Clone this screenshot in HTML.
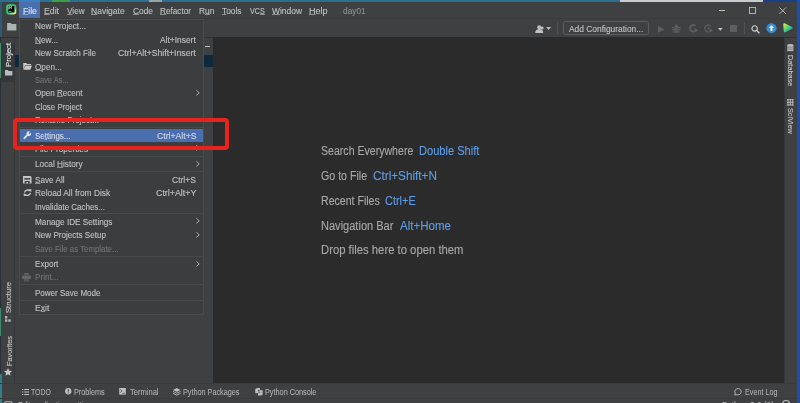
<!DOCTYPE html>
<html><head><meta charset="utf-8"><style>
html,body{margin:0;padding:0;width:800px;height:403px;overflow:hidden;background:#3c3f41}
body{position:relative;font-family:"Liberation Sans",sans-serif}
#w{position:absolute;left:0;top:0;width:800px;height:403px;will-change:transform}
.r{position:absolute}
.s{position:absolute;overflow:visible}
.t{position:absolute;white-space:nowrap;line-height:1.117;transform-origin:0 0;-webkit-text-stroke:0.12px currentColor}
.t u{text-decoration:underline;text-decoration-thickness:0.6px;text-underline-offset:0.3px;text-decoration-color:rgba(200,200,200,.6)}
.vl{transform:rotate(-90deg) translate(-100%,0);transform-origin:0 0;line-height:12px;text-align:right}
.vr{transform:rotate(90deg) translate(0,-100%);transform-origin:0 0;line-height:10px}
</style></head><body><div id="w">
<div class="r" style="left:0px;top:0px;width:800.00px;height:403.00px;background:#3e4042;"></div>
<div class="r" style="left:0px;top:0px;width:800.00px;height:1.60px;background:#2a6f8f;"></div>
<div class="r" style="left:19px;top:0px;width:21.00px;height:1.60px;background:#3a7fc0;"></div>
<div class="r" style="left:52px;top:0px;width:18.00px;height:1.60px;background:#3aa04a;"></div>
<div class="r" style="left:149px;top:0px;width:13.00px;height:1.60px;background:#9aa4a8;"></div>
<div class="r" style="left:620px;top:0px;width:143.00px;height:1.60px;background:#c8ccd0;"></div>
<div class="r" style="left:763px;top:0px;width:37.00px;height:1.60px;background:#1c3f8c;"></div>
<div class="r" style="left:796.8px;top:0px;width:3.20px;height:403.00px;background:#1e4fa8;"></div>
<div class="r" style="left:0px;top:18.4px;width:796.80px;height:0.60px;background:#3a3c3e;"></div>
<div class="r" style="left:0px;top:36.6px;width:796.80px;height:0.80px;background:#2f3133;"></div>
<div class="r" style="left:213.4px;top:37.4px;width:570.20px;height:345.80px;background:#2b2b2b;"></div>
<div class="r" style="left:14px;top:37.4px;width:0.60px;height:345.80px;background:#343638;"></div>
<div class="r" style="left:783.6px;top:37.4px;width:0.60px;height:345.80px;background:#343638;"></div>
<div class="r" style="left:0px;top:37px;width:1.40px;height:366.00px;background:#2a3238;"></div>
<div class="r" style="left:0px;top:43px;width:1.40px;height:35.00px;background:#3f8f6a;"></div>
<div class="r" style="left:1.4px;top:43px;width:12.60px;height:39.30px;background:#35383a;"></div>
<div class="r" style="left:0px;top:308px;width:1.40px;height:28.00px;background:#3a8a6c;"></div>
<div class="r" style="left:0px;top:374px;width:1.50px;height:29.00px;background:#2e7f8a;"></div>
<div class="r" style="left:14.6px;top:54.6px;width:198.80px;height:12.60px;background:#0d293e;"></div>
<div class="r" style="left:0px;top:383.2px;width:796.80px;height:0.60px;background:#383a3c;"></div>
<div class="r" style="left:0px;top:398.2px;width:796.80px;height:0.60px;background:#393b3d;"></div>
<div class="r" style="left:19.2px;top:1.6px;width:21.00px;height:16.80px;background:#4b6eaf;"></div>
<div class="t" style="left:22.51px;top:6.00px;font-size:9.30px;color:#dfe4ec;transform:scaleX(0.9237);"><u>F</u>ile</div>
<div class="t" style="left:43.50px;top:6.00px;font-size:9.30px;color:#c0c0c0;transform:scaleX(0.9376);"><u>E</u>dit</div>
<div class="t" style="left:66.70px;top:6.00px;font-size:9.30px;color:#c0c0c0;transform:scaleX(0.8802);"><u>V</u>iew</div>
<div class="t" style="left:91.12px;top:6.00px;font-size:9.30px;color:#c0c0c0;transform:scaleX(0.9164);"><u>N</u>avigate</div>
<div class="t" style="left:132.78px;top:6.00px;font-size:9.30px;color:#c0c0c0;transform:scaleX(0.8976);"><u>C</u>ode</div>
<div class="t" style="left:160.04px;top:6.00px;font-size:9.30px;color:#c0c0c0;transform:scaleX(0.8841);"><u>R</u>efactor</div>
<div class="t" style="left:199.33px;top:6.00px;font-size:9.30px;color:#c0c0c0;transform:scaleX(0.9008);">R<u>u</u>n</div>
<div class="t" style="left:221.93px;top:6.00px;font-size:9.30px;color:#c0c0c0;transform:scaleX(0.9008);"><u>T</u>ools</div>
<div class="t" style="left:250.00px;top:6.00px;font-size:9.30px;color:#c0c0c0;transform:scaleX(0.7738);">VC<u>S</u></div>
<div class="t" style="left:272.00px;top:6.00px;font-size:9.30px;color:#c0c0c0;transform:scaleX(0.9061);"><u>W</u>indow</div>
<div class="t" style="left:308.78px;top:6.00px;font-size:9.30px;color:#c0c0c0;transform:scaleX(0.9725);"><u>H</u>elp</div>
<div class="t" style="left:343.42px;top:6.00px;font-size:9.30px;color:#8a8d8f;transform:scaleX(0.8961);">day01</div>
<svg class="s" style="left:5.6px;top:4.4px;" width="10.5" height="10.7" viewBox="0 0 10 10"><defs><linearGradient id="pg" x1="0" y1="0" x2="1" y2="1"><stop offset="0" stop-color="#36d98c"/><stop offset=".45" stop-color="#22c76e"/><stop offset=".62" stop-color="#3cc8b0"/><stop offset=".8" stop-color="#c8f060"/><stop offset="1" stop-color="#f8f45a"/></linearGradient></defs><rect x="0.2" y="0.2" width="9.6" height="9.6" rx="2.6" fill="url(#pg)"/><rect x="2.2" y="1.8" width="5.8" height="6.2" fill="#040604"/><path d="M2.8 2.5h1.2v1.3H2.8M2.8 2.5v2.4M5.7 2.5h-.9v1.5h1" stroke="#e0ece0" stroke-width=".7" fill="none"/><rect x="2.8" y="6.8" width="2.2" height=".6" fill="#c8d4c8"/></svg>
<div class="r" style="left:0px;top:1.6px;width:1.50px;height:35.40px;background:#2c5a70;"></div>
<div class="r" style="left:719px;top:9.6px;width:6.40px;height:0.80px;background:#bbbbbb;"></div>
<svg class="s" style="left:749px;top:6.8px;" width="7" height="7" viewBox="0 0 7 7"><rect x=".5" y=".5" width="6" height="6" fill="none" stroke="#bbbbbb" stroke-width=".9"/></svg>
<svg class="s" style="left:778.8px;top:6.6px;" width="7.4" height="7.4" viewBox="0 0 7 7"><path d="M.5 .5L6.5 6.5M6.5 .5L.5 6.5" stroke="#bbbbbb" stroke-width=".9"/></svg>
<svg class="s" style="left:7.2px;top:23.4px;" width="9.5" height="7.4" viewBox="0 0 10 8"><path d="M0 0h4l1 1.2h5V8H0z" fill="#aab4b4"/></svg>
<svg class="s" style="left:535.4px;top:24.6px;" width="10.5" height="8" viewBox="0 0 10 8"><circle cx="4" cy="2.2" r="2" fill="#c0c0c0"/><path d="M0 8c0-3 1.8-4 4-4s4 1 4 4z" fill="#c0c0c0"/><circle cx="6.8" cy="3" r="1.6" fill="#c0c0c0"/></svg>
<svg class="s" style="left:546px;top:27.4px;" width="5.2" height="3" viewBox="0 0 5 3"><path d="M0 0h5L2.5 3z" fill="#bbbbbb"/></svg>
<div class="r" style="left:557px;top:22px;width:0.80px;height:12.40px;background:#505355;"></div>
<div class="r" style="left:562.7px;top:21.2px;width:86.00px;height:13.60px;background:transparent;border:1px solid #5b5e60;border-radius:2.5px;box-sizing:border-box"></div>
<div class="t" style="left:568.70px;top:24.00px;font-size:9.00px;color:#c0c0c0;transform:scaleX(0.9333);">Add Configuration...</div>
<svg class="s" style="left:657.6px;top:25.7px;" width="6.6" height="6.8" viewBox="0 0 7 7"><path d="M0 0L7 3.5L0 7z" fill="#5c5f61"/></svg>
<svg class="s" style="left:672.4px;top:24.2px;" width="8.8" height="8.8" viewBox="0 0 9 9"><ellipse cx="4.5" cy="5.4" rx="2.5" ry="3.3" fill="#5c5f61"/><circle cx="4.5" cy="1.8" r="1.4" fill="#5c5f61"/><path d="M0 3.6h9M0 5.8h9M.4 8.2h8.2" stroke="#5c5f61" stroke-width="1"/><path d="M2.4 4.7h4.2M2.4 6.9h4.2" stroke="#45484a" stroke-width=".6"/></svg>
<svg class="s" style="left:688.6px;top:24.4px;" width="9.6" height="9" viewBox="0 0 10 9"><path d="M6.4 1.6A3.4 3.4 0 1 0 5.4 7.6" stroke="#5c5f61" stroke-width="2" fill="none"/><path d="M5.6 3.8L9.6 6.3L5.6 8.8z" fill="#5c5f61"/></svg>
<svg class="s" style="left:704px;top:24.4px;" width="9.6" height="9" viewBox="0 0 10 9"><path d="M7.2 2.2A3.6 3.6 0 1 0 5 8" stroke="#5c5f61" stroke-width="1.2" fill="none"/><path d="M4.4 2.6v2.2h2" stroke="#5c5f61" stroke-width="1.1" fill="none"/><path d="M5.8 4.4L9.6 6.6L5.8 8.8z" fill="#5c5f61"/></svg>
<svg class="s" style="left:718.3px;top:27.6px;" width="4.6" height="2.8" viewBox="0 0 5 3"><path d="M0 0h5L2.5 3z" fill="#c8c8c8"/></svg>
<div class="r" style="left:729.8px;top:25.4px;width:7.40px;height:7.00px;background:#5c5f61;"></div>
<div class="r" style="left:744px;top:22px;width:0.80px;height:12.40px;background:#505355;"></div>
<svg class="s" style="left:750.6px;top:24.7px;" width="9" height="8.6" viewBox="0 0 9 9"><circle cx="3.6" cy="3.6" r="2.8" fill="none" stroke="#d0d0d0" stroke-width="1.2"/><path d="M5.6 5.6L8.6 8.6" stroke="#d0d0d0" stroke-width="1.4"/></svg>
<svg class="s" style="left:765.8px;top:23.3px;" width="11" height="10.5" viewBox="0 0 11 11"><circle cx="5.5" cy="5.5" r="5.3" fill="#3a8fd3"/><circle cx="5.5" cy="5.5" r="4.8" fill="none" stroke="#2f7ebf" stroke-width=".5"/><path d="M5.5 2.3L8.2 5.3H6.5V8.5H4.5V5.3H2.8z" fill="#f4f8fc"/></svg>
<svg class="s" style="left:782.8px;top:23.4px;" width="9.8" height="9.8" viewBox="0 0 10 10"><defs><linearGradient id="jg" x1="0" y1="0" x2="1" y2="1"><stop offset="0" stop-color="#f2f25a"/><stop offset=".35" stop-color="#7ada5a"/><stop offset=".6" stop-color="#2cc49a"/><stop offset="1" stop-color="#1a78c8"/></linearGradient></defs><path d="M1.4 .2C.7 .2 .2 .8 .3 1.6L.8 8.6C.9 9.5 1.6 9.9 2.4 9.5L9.3 5.8C10 5.4 10 4.6 9.3 4.2L2.2 .4z" fill="url(#jg)"/></svg>
<div class="t" style="left:4.85px;top:67.22px;font-size:6.30px;color:#e6e6e6;transform:rotate(-90deg) scaleX(1.2258);">Project</div>
<svg class="s" style="left:4.6px;top:69.9px;" width="7.4" height="5.6" viewBox="0 0 8 6"><path d="M0 0h3l1 1h4v5H0z" fill="#b8bcbe"/></svg>
<div class="t" style="left:5.09px;top:313.24px;font-size:7.00px;color:#c4c4c4;transform:rotate(-90deg) scaleX(1.0939);">Structure</div>
<svg class="s" style="left:5px;top:316.2px;" width="5.8" height="6" viewBox="0 0 6 6"><rect x="0" y="0" width="2.4" height="2.4" fill="#bbb"/><rect x="0" y="3.4" width="2.4" height="2.4" fill="#bbb"/><rect x="3.4" y="3.4" width="2.4" height="2.4" fill="#bbb"/></svg>
<div class="t" style="left:5.69px;top:366.38px;font-size:7.00px;color:#c4c4c4;transform:rotate(-90deg) scaleX(1.0406);">Favorites</div>
<svg class="s" style="left:3.8px;top:368px;" width="8" height="8" viewBox="0 0 10 10"><path d="M5 0l1.5 3.3 3.5.4-2.6 2.4.7 3.5L5 7.8 1.9 9.6l.7-3.5L0 3.7l3.5-.4z" fill="#c8c8c8"/></svg>
<div class="r" style="left:205px;top:45.8px;width:4.60px;height:1.00px;background:#c0c0c0;"></div>
<svg class="s" style="left:786.9px;top:44.4px;" width="6.7" height="7.5" viewBox="0 0 7 8"><ellipse cx="3.5" cy="1.2" rx="3.3" ry="1.1" fill="#bbb"/><rect x=".2" y="1.2" width="6.6" height="6.4" fill="#bbb"/><path d="M.2 3.3h6.6M.2 5.4h6.6" stroke="#3c3f41" stroke-width=".5"/></svg>
<div class="t" style="left:793.90px;top:54.91px;font-size:7.00px;color:#c4c4c4;transform:rotate(90deg) scaleX(1.0474);">Database</div>
<svg class="s" style="left:786.9px;top:99px;" width="6.7" height="6.7" viewBox="0 0 7 7"><path d="M0 .8h7M0 3.5h7M0 6.2h7M1 0v7M3.5 0v7M6 0v7" stroke="#bbb" stroke-width="1"/></svg>
<div class="t" style="left:794.11px;top:108.27px;font-size:7.00px;color:#c4c4c4;transform:rotate(90deg) scaleX(1.0423);">SciView</div>
<div class="t" style="left:321.32px;top:145.00px;font-size:12.30px;color:#a8a8a8;transform:scaleX(0.8601);-webkit-text-stroke:0.12px currentColor">Search Everywhere</div>
<div class="t" style="left:419.31px;top:145.00px;font-size:12.30px;color:#5d9de8;transform:scaleX(0.9017);-webkit-text-stroke:0.12px currentColor">Double Shift</div>
<div class="t" style="left:321.27px;top:170.00px;font-size:12.30px;color:#a8a8a8;transform:scaleX(0.8657);-webkit-text-stroke:0.12px currentColor">Go to File</div>
<div class="t" style="left:373.41px;top:170.00px;font-size:12.30px;color:#5d9de8;transform:scaleX(0.9551);-webkit-text-stroke:0.12px currentColor">Ctrl+Shift+N</div>
<div class="t" style="left:320.95px;top:195.00px;font-size:12.30px;color:#a8a8a8;transform:scaleX(0.8600);-webkit-text-stroke:0.12px currentColor">Recent Files</div>
<div class="t" style="left:385.25px;top:195.00px;font-size:12.30px;color:#5d9de8;transform:scaleX(0.8894);-webkit-text-stroke:0.12px currentColor">Ctrl+E</div>
<div class="t" style="left:320.92px;top:220.00px;font-size:12.30px;color:#a8a8a8;transform:scaleX(0.8979);-webkit-text-stroke:0.12px currentColor">Navigation Bar</div>
<div class="t" style="left:399.60px;top:220.00px;font-size:12.30px;color:#5d9de8;transform:scaleX(0.9366);-webkit-text-stroke:0.12px currentColor">Alt+Home</div>
<div class="t" style="left:320.90px;top:244.00px;font-size:12.30px;color:#a8a8a8;transform:scaleX(0.9183);-webkit-text-stroke:0.12px currentColor">Drop files here to open them</div>
<svg class="s" style="left:21.6px;top:388.6px;" width="7" height="6" viewBox="0 0 7 6"><path d="M0 .5h1.2M0 3h1.2M0 5.5h1.2M2.2 .5H7M2.2 3H7M2.2 5.5H7" stroke="#c0c0c0" stroke-width="1"/></svg>
<div class="t" style="left:31.46px;top:388.00px;font-size:8.40px;color:#b4b4b4;transform:scaleX(0.8234);-webkit-text-stroke:0.05px currentColor">TODO</div>
<svg class="s" style="left:65px;top:388px;" width="6.5" height="6.5" viewBox="0 0 7 7"><circle cx="3.5" cy="3.5" r="3.4" fill="#c0c0c0"/><path d="M3.5 1.4v2.6M3.5 4.8v1" stroke="#3c3f41" stroke-width="1.1"/></svg>
<div class="t" style="left:74.42px;top:388.00px;font-size:8.40px;color:#b4b4b4;transform:scaleX(0.8690);-webkit-text-stroke:0.05px currentColor">Problems</div>
<svg class="s" style="left:119px;top:388px;" width="7" height="6.6" viewBox="0 0 7 7"><rect x="0" y="0" width="7" height="7" fill="#c0c0c0"/><path d="M1.2 1.6L3 3.2L1.2 4.8M3.4 5.6h2.4" stroke="#3c3f41" stroke-width=".8" fill="none"/></svg>
<div class="t" style="left:129.85px;top:388.00px;font-size:8.40px;color:#b4b4b4;transform:scaleX(0.9021);-webkit-text-stroke:0.05px currentColor">Terminal</div>
<svg class="s" style="left:172.5px;top:387.8px;" width="7.5" height="7.5" viewBox="0 0 8 8"><path d="M4 0L8 2L4 4L0 2z" fill="#c0c0c0"/><path d="M0 3.6L4 5.6L8 3.6M0 5.6L4 7.6L8 5.6" stroke="#c0c0c0" stroke-width=".9" fill="none"/></svg>
<div class="t" style="left:182.72px;top:388.00px;font-size:8.40px;color:#b4b4b4;transform:scaleX(0.8645);-webkit-text-stroke:0.05px currentColor">Python Packages</div>
<svg class="s" style="left:254.7px;top:387.8px;" width="7.9" height="7.4" viewBox="0 0 8 8"><path d="M2 0h3v2.2H3v1H0V1zM6 8H3V5.8h2v-1h3V7z" fill="#c0c0c0"/><rect x="0" y="3" width="3.6" height="2.6" fill="#c0c0c0"/><rect x="4.4" y="2.4" width="3.6" height="2.6" fill="#c0c0c0"/></svg>
<div class="t" style="left:265.42px;top:388.00px;font-size:8.40px;color:#b4b4b4;transform:scaleX(0.8697);-webkit-text-stroke:0.05px currentColor">Python Console</div>
<svg class="s" style="left:734px;top:387.7px;" width="8.2" height="7.2" viewBox="0 0 8 7"><path d="M4 .5a3.4 3.1 0 1 1-1.5 6L.6 6.8l.7-1.6A3.4 3.1 0 0 1 4 .5z" fill="none" stroke="#c0c0c0" stroke-width=".9"/></svg>
<div class="t" style="left:744.92px;top:388.00px;font-size:8.40px;color:#b4b4b4;transform:scaleX(0.8601);-webkit-text-stroke:0.05px currentColor">Event Log</div>
<svg class="s" style="left:4.4px;top:400.6px;" width="8.7" height="8" viewBox="0 0 9 8"><rect x=".6" y=".6" width="7.8" height="7" rx="1.4" fill="none" stroke="#bbb" stroke-width="1.1"/></svg>
<div class="t" style="left:17.81px;top:401.00px;font-size:8.60px;color:#b4b4b4;transform:scaleX(0.8528);-webkit-text-stroke:0.05px currentColor">Edit application settings</div>
<div class="t" style="left:722.34px;top:401.00px;font-size:8.60px;color:#b4b4b4;transform:scaleX(0.9613);-webkit-text-stroke:0.05px currentColor">Python 3.6 (2)</div>
<svg class="s" style="left:781.7px;top:400.4px;" width="8" height="8" viewBox="0 0 8 8"><circle cx="4" cy="4" r="3.5" fill="none" stroke="#bbb" stroke-width="1.2"/></svg>
<div class="r" style="left:19px;top:18.8px;width:185.20px;height:296.20px;background:#3c3d3f;border:1px solid #4a4b4d;box-sizing:border-box"></div>
<div class="t" style="left:35.14px;top:21.00px;font-size:9.15px;color:#c0c0c0;transform:scaleX(0.8971);">New Project...</div>
<div class="t" style="left:35.13px;top:35.00px;font-size:9.15px;color:#c0c0c0;transform:scaleX(0.9087);"><u>N</u>ew...</div>
<div class="t" style="left:160.00px;top:35.00px;font-size:9.15px;color:#c0c0c0;transform:scaleX(0.9206);">Alt+Insert</div>
<div class="t" style="left:35.15px;top:48.00px;font-size:9.15px;color:#c0c0c0;transform:scaleX(0.8849);">New Scratch File</div>
<div class="t" style="left:117.82px;top:48.00px;font-size:9.15px;color:#c0c0c0;transform:scaleX(0.9496);">Ctrl+Alt+Shift+Insert</div>
<div class="t" style="left:35.43px;top:62.00px;font-size:9.15px;color:#c0c0c0;transform:scaleX(0.8931);"><u>O</u>pen...</div>
<svg class="s" style="left:22.8px;top:62.99999999999999px;" width="9.2" height="6.8" viewBox="0 0 9 7"><path d="M0 0h3l1 1h4v1.4H2L0 6.6z" fill="#c8c8c8"/><path d="M2.3 2.8H9L7.2 7H0z" fill="#c8c8c8"/></svg>
<div class="t" style="left:35.46px;top:75.00px;font-size:9.15px;color:#727272;transform:scaleX(0.8178);">Save As...</div>
<div class="t" style="left:35.44px;top:88.00px;font-size:9.15px;color:#c0c0c0;transform:scaleX(0.8825);">Open <u>R</u>ecent</div>
<svg class="s" style="left:196px;top:89.70000000000002px;" width="3.8" height="5.8" viewBox="0 0 4 6"><path d="M.4 .3L3.4 3L.4 5.7" stroke="#c0c0c0" stroke-width=".9" fill="none"/></svg>
<div class="t" style="left:35.40px;top:102.00px;font-size:9.15px;color:#c0c0c0;transform:scaleX(0.8658);">Close Project</div>
<div class="t" style="left:35.16px;top:115.00px;font-size:9.15px;color:#c0c0c0;transform:scaleX(0.8746);">Rename Project...</div>
<div class="r" style="left:20px;top:127.00000000000003px;width:183.20px;height:0.80px;background:#48494b;"></div>
<div class="r" style="left:19.8px;top:128.8px;width:183.60px;height:13.30px;background:#4b6eaf;"></div>
<div class="t" style="left:35.44px;top:131.00px;font-size:9.15px;color:#d4dbe8;transform:scaleX(0.8738);">Se<u>t</u>tings...</div>
<div class="t" style="left:156.57px;top:131.00px;font-size:9.15px;color:#cdd5e3;transform:scaleX(0.9497);">Ctrl+Alt+S</div>
<svg class="s" style="left:22.5px;top:130.90000000000003px;" width="8.6" height="8.4" viewBox="0 0 9 9"><path d="M1.3 7.7L4.9 4.1" stroke="#dfe3ea" stroke-width="2" stroke-linecap="round"/><circle cx="6.1" cy="2.9" r="2.5" fill="#dfe3ea"/><path d="M6.3 2.7L8.9 0.1" stroke="#4b6eaf" stroke-width="1.4"/></svg>
<div class="t" style="left:35.14px;top:144.00px;font-size:9.15px;color:#c0c0c0;transform:scaleX(0.9013);">File Properties</div>
<svg class="s" style="left:196px;top:145.30000000000004px;" width="3.8" height="5.8" viewBox="0 0 4 6"><path d="M.4 .3L3.4 3L.4 5.7" stroke="#c0c0c0" stroke-width=".9" fill="none"/></svg>
<div class="r" style="left:20px;top:155.80000000000004px;width:183.20px;height:0.80px;background:#48494b;"></div>
<div class="t" style="left:35.14px;top:159.00px;font-size:9.15px;color:#c0c0c0;transform:scaleX(0.9050);">Local <u>H</u>istory</div>
<svg class="s" style="left:196px;top:160.70000000000005px;" width="3.8" height="5.8" viewBox="0 0 4 6"><path d="M.4 .3L3.4 3L.4 5.7" stroke="#c0c0c0" stroke-width=".9" fill="none"/></svg>
<div class="r" style="left:20px;top:171.20000000000005px;width:183.20px;height:0.80px;background:#48494b;"></div>
<div class="t" style="left:35.43px;top:175.00px;font-size:9.15px;color:#c0c0c0;transform:scaleX(0.8949);"><u>S</u>ave All</div>
<div class="t" style="left:172.17px;top:175.00px;font-size:9.15px;color:#c0c0c0;transform:scaleX(0.9339);">Ctrl+S</div>
<svg class="s" style="left:22.7px;top:176.40000000000003px;" width="8.5" height="7.6" viewBox="0 0 8.5 7.6"><path d="M0 0h7.4l1.1 1.1v6.5H0z" fill="#c6c6c6"/><rect x="1.3" y="2.1" width="5.8" height="1.5" fill="#3c3d3f"/><rect x="1.7" y="5" width="5" height="2.6" fill="#3c3d3f"/><rect x="3.4" y="6" width="1.6" height="1.6" fill="#c6c6c6"/></svg>
<div class="t" style="left:35.13px;top:188.00px;font-size:9.15px;color:#c0c0c0;transform:scaleX(0.9142);">Reload All from Disk</div>
<div class="t" style="left:155.56px;top:188.00px;font-size:9.15px;color:#c0c0c0;transform:scaleX(0.9698);">Ctrl+Alt+Y</div>
<svg class="s" style="left:22.5px;top:189.20000000000005px;" width="9" height="7.4" viewBox="0 0 9 8"><path d="M1.3 3.8A3.3 3.3 0 0 1 7 2.2M7.7 4.2A3.3 3.3 0 0 1 2 5.8" stroke="#c8c8c8" stroke-width="1.5" fill="none"/><path d="M5.4 0.4h3.2v3.2zM3.6 7.6H.4V4.4z" fill="#c8c8c8"/></svg>
<div class="t" style="left:35.08px;top:202.00px;font-size:9.15px;color:#c0c0c0;transform:scaleX(0.8725);">Invalidate Caches...</div>
<div class="r" style="left:20px;top:213.40000000000006px;width:183.20px;height:0.80px;background:#48494b;"></div>
<div class="t" style="left:35.14px;top:217.00px;font-size:9.15px;color:#c0c0c0;transform:scaleX(0.8980);">Manage IDE Settings</div>
<svg class="s" style="left:196px;top:218.30000000000007px;" width="3.8" height="5.8" viewBox="0 0 4 6"><path d="M.4 .3L3.4 3L.4 5.7" stroke="#c0c0c0" stroke-width=".9" fill="none"/></svg>
<div class="t" style="left:35.15px;top:230.00px;font-size:9.15px;color:#c0c0c0;transform:scaleX(0.8859);">New Projects Setup</div>
<svg class="s" style="left:196px;top:231.70000000000007px;" width="3.8" height="5.8" viewBox="0 0 4 6"><path d="M.4 .3L3.4 3L.4 5.7" stroke="#c0c0c0" stroke-width=".9" fill="none"/></svg>
<div class="t" style="left:35.45px;top:244.00px;font-size:9.15px;color:#727272;transform:scaleX(0.8591);">Save File as Template...</div>
<div class="r" style="left:20px;top:255.60000000000008px;width:183.20px;height:0.80px;background:#48494b;"></div>
<div class="t" style="left:35.15px;top:259.00px;font-size:9.15px;color:#c0c0c0;transform:scaleX(0.8844);">Export</div>
<svg class="s" style="left:196px;top:260.5px;" width="3.8" height="5.8" viewBox="0 0 4 6"><path d="M.4 .3L3.4 3L.4 5.7" stroke="#c0c0c0" stroke-width=".9" fill="none"/></svg>
<div class="t" style="left:35.15px;top:272.00px;font-size:9.15px;color:#727272;transform:scaleX(0.8920);">Print...</div>
<svg class="s" style="left:22.4px;top:272.90000000000003px;" width="9" height="8.6" viewBox="0 0 9 9"><rect x="2.2" y="0" width="4.6" height="1.8" fill="#65686a"/><rect x="0" y="2.6" width="9" height="3.6" fill="#65686a"/><rect x="2.2" y="5.4" width="4.6" height="3.4" fill="#65686a"/><path d="M3 6.6h3M3 7.8h3" stroke="#3c3d3f" stroke-width=".5"/></svg>
<div class="r" style="left:20px;top:284.4px;width:183.20px;height:0.80px;background:#48494b;"></div>
<div class="t" style="left:35.16px;top:288.00px;font-size:9.15px;color:#c0c0c0;transform:scaleX(0.8784);">Power Save Mode</div>
<div class="r" style="left:20px;top:299.79999999999995px;width:183.20px;height:0.80px;background:#48494b;"></div>
<div class="t" style="left:35.11px;top:303.00px;font-size:9.15px;color:#c0c0c0;transform:scaleX(0.9446);">E<u>x</u>it</div>
<div class="r" style="left:13.4px;top:117.8px;width:216.10px;height:32.00px;background:transparent;border:4.4px solid #e8231b;border-radius:4px;box-sizing:border-box"></div>
</div></body></html>
